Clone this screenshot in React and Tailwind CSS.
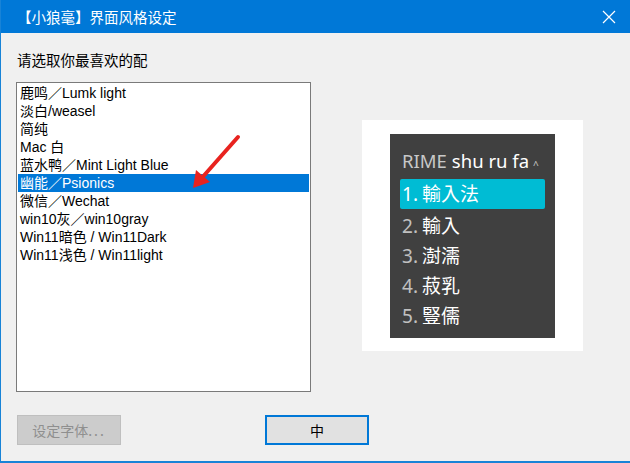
import React from 'react';

const themes = [
  '鹿鸣／Lumk light',
  '淡白/weasel',
  '简纯',
  'Mac 白',
  '蓝水鸭／Mint Light Blue',
  '幽能／Psionics',
  '微信／Wechat',
  'win10灰／win10gray',
  'Win11暗色 / Win11Dark',
  'Win11浅色 / Win11light',
];

const candidates = ['輸入法', '輸入', '澍濡', '菽乳', '豎儒'];

export default function App() {
  const selected = 5;
  return (
    <div className="relative w-[630px] h-[463px] bg-[#f0f0f0] border-l border-b-2 border-[#1883d7] overflow-hidden flex flex-col font-['Liberation_Sans','Noto_Sans_CJK_SC',sans-serif]">
      <div className="h-[33px] shrink-0 bg-[#0078d7] flex items-center justify-between pl-[16px] pr-[14px] text-white text-[14.5px]">
        <span className="font-['Noto_Sans_CJK_SC',sans-serif]">【小狼毫】界面风格设定</span>
        <svg width="14" height="14" viewBox="0 0 14 14">
          <path d="M1 1 L13 13 M13 1 L1 13" stroke="white" strokeWidth="1.2" fill="none" />
        </svg>
      </div>

      <div className="flex-1 flex flex-col pl-[15px] pt-[17px]">
        <div className="text-[14.5px] leading-[20px] text-black pl-[1px] font-['Noto_Sans_CJK_SC',sans-serif]">请选取你最喜欢的配</div>

        <div className="flex mt-[12px]">
          <div className="w-[295px] h-[310px] bg-white border border-[#7a7a7a] px-[1px] pt-[1px] shrink-0">
            {themes.map((t, i) => (
              <div
                key={t}
                className={`h-[18px] leading-[18px] pl-[2px] text-[14px] whitespace-nowrap ${i === selected ? 'bg-[#0078d7] text-white' : 'text-black'}`}
              >
                {t}
              </div>
            ))}
          </div>

          <div className="ml-[51px] mt-[38px] w-[221px] h-[231px] bg-white flex justify-center pt-[14px]">
            <div className="w-[165px] h-[204px] bg-[#404040] px-[10px] pt-[12px] font-['Noto_Sans','Noto_Sans_CJK_TC',sans-serif]">
              <div className="h-[30px] flex items-center text-[18.5px] whitespace-nowrap pl-[2px]">
                <span className="text-[#c8c8c8]">RIME</span>
                <span className="text-white ml-[5px]">shu ru fa</span>
                <span className="text-[#c8c8c8] text-[10px] ml-[4px] mt-[8px]">^</span>
              </div>
              <div className="mt-[3px] flex flex-col">
                {candidates.map((c, i) => (
                  <div
                    key={c}
                    className={`h-[30px] flex items-center text-[19px] pl-[2px] ${i === 0 ? 'bg-[#00bcd4] rounded-[2px] h-[28px] mb-[2px]' : ''}`}
                  >
                    <span className={i === 0 ? 'text-white' : 'text-[#c0c0c0]'}>{i + 1}.</span>
                    <span className="text-white ml-[4px]">{c}</span>
                  </div>
                ))}
              </div>
            </div>
          </div>
        </div>

        <div className="flex mt-[23px]">
          <div className="w-[104px] h-[30px] ml-[1px] bg-[#cccccc] border border-[#bfbfbf] flex items-center justify-center text-[14px] text-[#8f8f8f] font-['Noto_Sans_CJK_SC',sans-serif]">
            设定字体<span className="tracking-[2px]">...</span>
          </div>
          <div className="w-[104px] h-[30px] ml-[144px] bg-[#e1e1e1] border-2 border-[#0078d7] flex items-center justify-center text-[14px] text-black font-['Noto_Sans_CJK_SC',sans-serif]">
            中
          </div>
        </div>
      </div>

      <svg className="absolute left-[180px] top-[130px]" width="70" height="70" viewBox="0 0 70 70">
        <path d="M57 7 L19 50" stroke="#e8231f" strokeWidth="4" strokeLinecap="round" fill="none" />
        <path d="M12 58 L15 40 L29 52 Z" fill="#e8231f" />
      </svg>
    </div>
  );
}
